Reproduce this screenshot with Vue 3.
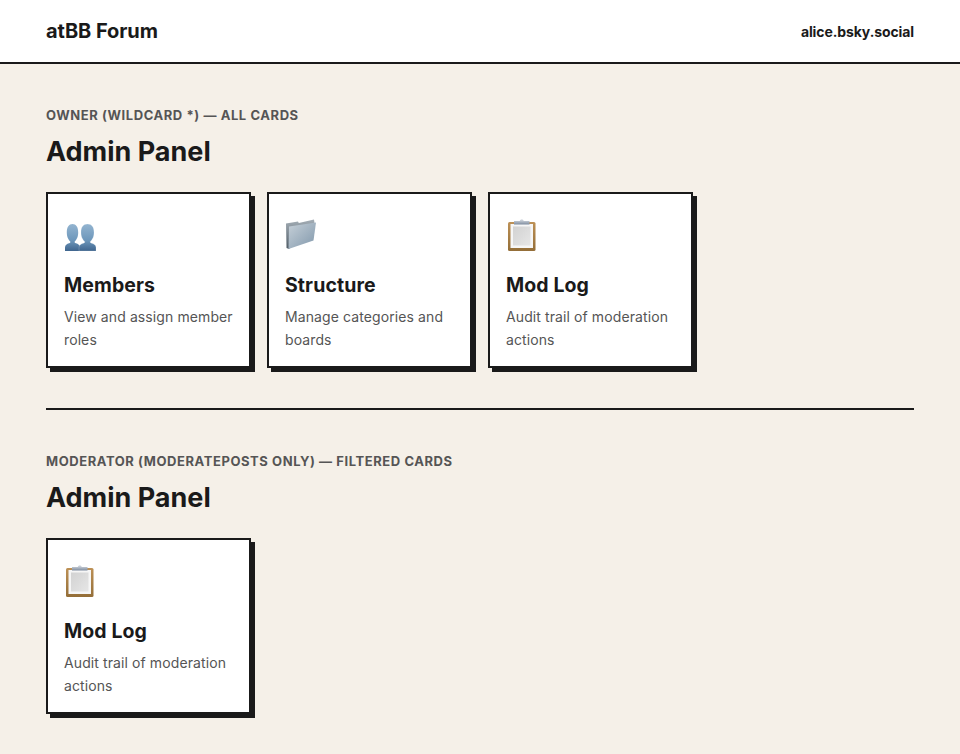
<template>
  <div class="page">
    <header class="topbar">
      <span class="brand">atBB Forum</span>
      <span class="user">alice.bsky.social</span>
    </header>

    <main class="content">
      <section v-for="(group, index) in groups" :key="group.label" class="group" :class="{ first: index === 0 }">
        <p class="label">{{ group.label }}</p>
        <h1 class="title">Admin Panel</h1>
        <div class="cards">
          <a v-for="card in group.cards" :key="card.name" class="card" href="#">
            <div class="icon">
              <svg v-if="card.icon === 'members'" width="36" height="36" viewBox="0 0 36 36">
                <defs>
                  <linearGradient id="person" x1="0" y1="0" x2="0" y2="1">
                    <stop offset="0" stop-color="#93b4d0" />
                    <stop offset="0.6" stop-color="#6d97bb" />
                    <stop offset="1" stop-color="#3f658e" />
                  </linearGradient>
                </defs>
                <path d="M1 33v-3.500c0-2.500 2-3.500 4-4.200 1.200-.4 1.500-1 1.300-1.900-1.500-1.500-3.500-4-3.500-9C2.800 9 5 6 8.500 6s5.700 3 5.700 8.400c0 5-2 7.500-3.500 9-.2.900.1 1.500 1.300 1.900 2 .7 4 1.700 4 4.200V33z" fill="url(#person)" />
                <path d="M15 33v-3.500c0-2.500 2.200-3.500 4.300-4.200 1.200-.4 1.600-1 1.400-1.900-1.600-1.500-3.700-4-3.700-9C17 9 19.300 6 23.500 6S30 9 30 14.400c0 5-2.100 7.500-3.700 9-.2.900.2 1.500 1.400 1.900 2.100.7 4.300 1.700 4.300 4.200V33z" fill="url(#person)" stroke="#fff" stroke-opacity="0.35" stroke-width="0.5" />
              </svg>
              <svg v-else-if="card.icon === 'folder'" width="36" height="36" viewBox="0 0 36 36">
                <defs>
                  <linearGradient id="folderBack" x1="0" y1="0" x2="0" y2="1">
                    <stop offset="0" stop-color="#a4aeb6" />
                    <stop offset="1" stop-color="#4f5c66" />
                  </linearGradient>
                  <linearGradient id="folderFront" x1="0" y1="0" x2="1" y2="1">
                    <stop offset="0" stop-color="#c6d0d8" />
                    <stop offset="1" stop-color="#8097ab" />
                  </linearGradient>
                </defs>
                <path d="M1 5.500l12-2 .8 1.500L29 1.500 29.500 5 4 31l-2.500-1z" fill="url(#folderBack)" />
                <path d="M4 8.500l27-4-2.500 18L3.500 31z" fill="url(#folderFront)" />
              </svg>
              <svg v-else width="36" height="36" viewBox="0 0 36 36">
                <defs>
                  <linearGradient id="clip" x1="0" y1="0" x2="0" y2="1">
                    <stop offset="0" stop-color="#dfe3e9" />
                    <stop offset="1" stop-color="#7d8b9e" />
                  </linearGradient>
                  <linearGradient id="board" x1="0" y1="0" x2="0" y2="1">
                    <stop offset="0" stop-color="#bd9156" />
                    <stop offset="1" stop-color="#946e38" />
                  </linearGradient>
                  <linearGradient id="sheet" x1="0" y1="0" x2="1" y2="1">
                    <stop offset="0" stop-color="#d2d2d2" />
                    <stop offset="1" stop-color="#e6e6e6" />
                  </linearGradient>
                </defs>
                <rect x="2" y="4" width="27.500" height="29" rx="1.500" fill="url(#board)" />
                <rect x="4.500" y="6" width="22.500" height="24" fill="#f6f6f6" />
                <rect x="7" y="8.500" width="17.500" height="19" fill="url(#sheet)" />
                <path d="M8 6.500V3h5.800C14.300 .6 17.200 .6 17.700 3h5.800v3.500z" fill="url(#clip)" />
              </svg>
            </div>
            <h2 class="name">{{ card.name }}</h2>
            <p class="desc">{{ card.desc }}</p>
          </a>
        </div>
      </section>
    </main>
  </div>
</template>

<script setup>
const members = { name: "Members", icon: "members", desc: "View and assign member roles" };
const structure = { name: "Structure", icon: "folder", desc: "Manage categories and boards" };
const modLog = { name: "Mod Log", icon: "log", desc: "Audit trail of moderation actions" };

const groups = [
  { label: "OWNER (WILDCARD *) — ALL CARDS", cards: [members, structure, modLog] },
  { label: "MODERATOR (MODERATEPOSTS ONLY) — FILTERED CARDS", cards: [modLog] },
];
</script>

<style>
html,
body {
  margin: 0;
  background: #f5f0e8;
}
</style>

<style scoped>
.page {
  min-height: 754px;
  background: #f5f0e8;
  color: #1a1a1a;
  font-family: Inter, "Noto Sans", sans-serif;
}

.topbar {
  display: flex;
  align-items: center;
  justify-content: space-between;
  height: 62px;
  padding: 0 46px;
  background: #fff;
  border-bottom: 2px solid #1a1a1a;
}

.brand {
  font-size: 20px;
  font-weight: 700;
  letter-spacing: -0.05px;
}

.user {
  font-size: 14px;
  font-weight: 700;
  letter-spacing: -0.1px;
}

.content {
  padding: 0 46px;
}

.group {
  box-sizing: border-box;
  padding-top: 42px;
}

.group.first {
  height: 346px;
  border-bottom: 2px solid #1a1a1a;
}

.label {
  margin: 0;
  height: 18px;
  line-height: 18px;
  font-size: 13px;
  font-weight: 700;
  letter-spacing: 0.57px;
  color: #555;
}

.title {
  margin: 8px 0 20px;
  height: 40px;
  line-height: 40px;
  font-size: 27px;
  font-weight: 700;
}

.cards {
  display: flex;
  gap: 16px;
}

.card {
  display: block;
  box-sizing: border-box;
  width: 205px;
  height: 176px;
  padding: 24px 16px 16px;
  background: #fff;
  border: 2px solid #1a1a1a;
  box-shadow: 4px 4px 0 #1a1a1a;
  color: inherit;
  text-decoration: none;
}

.icon {
  height: 36px;
  margin-bottom: 18px;
}

.icon svg {
  display: block;
}

.name {
  margin: 0 0 7px;
  line-height: 26px;
  font-size: 19.500px;
  font-weight: 700;
  letter-spacing: 0.1px;
}

.desc {
  margin: 0;
  font-size: 14px;
  line-height: 23px;
  letter-spacing: 0.1px;
  color: #555;
}
</style>
